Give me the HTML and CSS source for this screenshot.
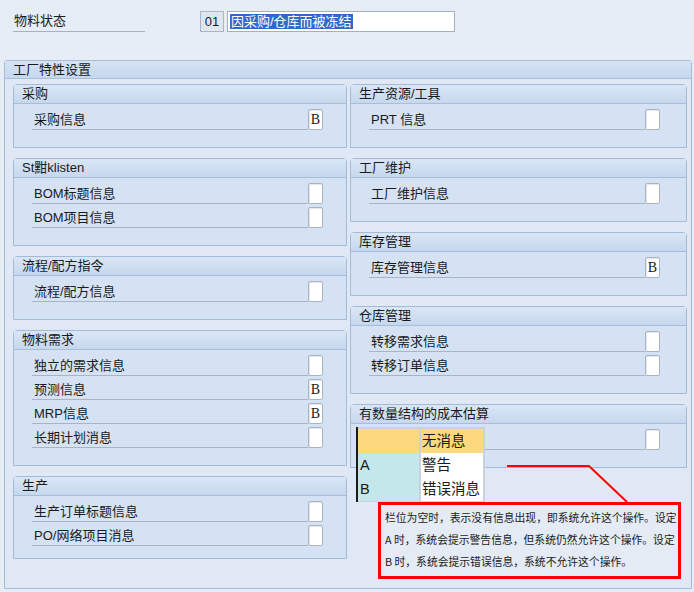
FILE: index.html
```html
<!DOCTYPE html>
<html lang="zh-CN">

<head>
  <meta charset="utf8">
  <title>物料状态 - 工厂特性设置</title>
  <link rel="stylesheet" href="styles.css">
</head>

<body>

  <div class="status-line">
    <span class="status-label">物料状态</span>
    <span class="status-code">01</span>
    <span class="status-input"><span class="selected">因采购/仓库而被冻结</span></span>
  </div>

  <div class="frame">
    <div class="frame-title">工厂特性设置</div>
    <div class="frame-body">

      <div class="column left">
        <div class="group">
          <div class="group-title">采购</div>
          <div class="group-body">
            <div class="row"><span class="lbl">采购信息</span><span class="chk">B</span></div>
          </div>
        </div>

        <div class="group">
          <div class="group-title">St黚klisten</div>
          <div class="group-body">
            <div class="row"><span class="lbl">BOM标题信息</span><span class="chk"></span></div>
            <div class="row"><span class="lbl">BOM项目信息</span><span class="chk"></span></div>
          </div>
        </div>

        <div class="group">
          <div class="group-title">流程/配方指令</div>
          <div class="group-body">
            <div class="row"><span class="lbl">流程/配方信息</span><span class="chk"></span></div>
          </div>
        </div>

        <div class="group">
          <div class="group-title">物料需求</div>
          <div class="group-body">
            <div class="row"><span class="lbl">独立的需求信息</span><span class="chk"></span></div>
            <div class="row"><span class="lbl">预测信息</span><span class="chk">B</span></div>
            <div class="row"><span class="lbl">MRP信息</span><span class="chk">B</span></div>
            <div class="row"><span class="lbl">长期计划消息</span><span class="chk"></span></div>
          </div>
        </div>

        <div class="group last">
          <div class="group-title">生产</div>
          <div class="group-body">
            <div class="row"><span class="lbl">生产订单标题信息</span><span class="chk"></span></div>
            <div class="row"><span class="lbl">PO/网络项目消息</span><span class="chk"></span></div>
          </div>
        </div>
      </div>

      <div class="column right">
        <div class="group">
          <div class="group-title">生产资源/工具</div>
          <div class="group-body">
            <div class="row"><span class="lbl">PRT 信息</span><span class="chk"></span></div>
          </div>
        </div>

        <div class="group">
          <div class="group-title">工厂维护</div>
          <div class="group-body">
            <div class="row"><span class="lbl">工厂维护信息</span><span class="chk"></span></div>
          </div>
        </div>

        <div class="group">
          <div class="group-title">库存管理</div>
          <div class="group-body">
            <div class="row"><span class="lbl">库存管理信息</span><span class="chk">B</span></div>
          </div>
        </div>

        <div class="group">
          <div class="group-title">仓库管理</div>
          <div class="group-body">
            <div class="row"><span class="lbl">转移需求信息</span><span class="chk"></span></div>
            <div class="row"><span class="lbl">转移订单信息</span><span class="chk"></span></div>
          </div>
        </div>

        <div class="group costing">
          <div class="group-title">有数量结构的成本估算</div>
          <div class="group-body">
            <div class="row"><span class="lbl"></span><span class="chk"></span></div>
          </div>

          <!-- value help list, open over the field -->
          <div class="dropdown">
            <div class="opt head"><span class="key"></span><span class="txt">无消息</span></div>
            <div class="opt"><span class="key">A</span><span class="txt">警告</span></div>
            <div class="opt"><span class="key">B</span><span class="txt">错误消息</span></div>
          </div>

          <svg class="connector" width="130" height="40">
            <polyline points="4,2 86,2 124,38" fill="none" stroke="#ff0000" stroke-width="2"></polyline>
          </svg>

          <div class="note">
            栏位为空时，表示没有信息出现，即系统允许这个操作。设定<br>
            A 时，系统会提示警告信息，但系统仍然允许这个操作。设定<br>
            B 时，系统会提示错误信息，系统不允许这个操作。
          </div>
        </div>
      </div>

    </div>
  </div>

</body>

</html>
```

FILE: styles.css
```css
* {
  box-sizing: border-box;
}

body {
  margin: 0;
  width: 694px;
  height: 592px;
  background-color: #e6edf6;
  font-family: "Liberation Sans", "Noto Sans CJK SC", sans-serif;
  font-size: 13px;
  color: #1a1a1a;
  overflow: hidden;
}

/* ---- status line ---- */

div.status-line {
  display: flex;
  align-items: center;
  height: 21px;
  margin: 11px 0 28px 13px;
}

div.status-line span.status-label {
  width: 132px;
  height: 21px;
  line-height: 20px;
  padding-left: 1px;
  border-bottom: 1px solid #a8b2bf;
  margin-right: 55px;
}

div.status-line span.status-code {
  width: 24px;
  height: 21px;
  line-height: 19px;
  text-align: center;
  background-color: #dfe6ee;
  border: 1px solid #a9b5c4;
  margin-right: 3px;
}

div.status-line span.status-input {
  width: 228px;
  height: 21px;
  line-height: 19px;
  padding-left: 2px;
  background-color: #fff;
  border: 1px solid #a3afbe;
}

div.status-line span.selected {
  background-color: #3169c6;
  color: #fff;
  padding: 0 1px;
}

/* ---- frame ---- */

div.frame {
  margin-left: 4px;
  width: 688px;
  height: 529px;
  border: 1px solid #a6bbd6;
  border-radius: 3px 3px 0 0;
  background-color: #dfe8f4;
}

div.frame-title {
  height: 18px;
  line-height: 17px;
  padding-left: 8px;
  background: linear-gradient(#d6e3f3, #c5d7ed);
  border-bottom: 1px solid #a8bed9;
}

div.frame-body {
  display: flex;
  column-gap: 3px;
  padding: 5px 0 0 8px;
}

div.column {
  display: flex;
  flex-direction: column;
  row-gap: 10px;
}

div.column.left {
  width: 334px;
}

div.column.right {
  width: 337px;
}

/* ---- group boxes ---- */

div.group {
  position: relative;
  border: 1px solid #a4bbd8;
  border-radius: 4px 4px 0 0;
  background-color: #d4e2f4;
}

div.group-title {
  height: 19px;
  line-height: 17px;
  padding-left: 8px;
  background: linear-gradient(#d9e6f5, #c6d8ee);
  border-bottom: 1px solid #a7bdd9;
}

div.group-body {
  display: flex;
  flex-direction: column;
  row-gap: 3px;
  padding: 5px 0 17px 18px;
}

div.group.last div.group-body {
  padding-bottom: 12px;
}

div.row {
  display: flex;
  height: 21px;
}

div.row span.lbl {
  width: 276px;
  height: 21px;
  line-height: 21px;
  padding-left: 2px;
  border-bottom: 1px solid #aab3bf;
}

div.row span.chk {
  width: 15px;
  height: 21px;
  line-height: 19px;
  text-align: center;
  font-family: "Liberation Serif", serif;
  font-size: 14px;
  background-color: #fff;
  border: 1px solid #aab3bf;
  border-radius: 2px;
  box-shadow: inset 1px 1px 0 #e4e8ee;
}

/* ---- value help list and note ---- */

div.dropdown {
  position: absolute;
  left: 5px;
  top: 22px;
  width: 129px;
  padding: 2px 2px 1px 0;
  background-color: #c9d2dc;
  border-left: 2px solid #1b1b1b;
  font-family: "Liberation Sans", "Noto Sans CJK SC", sans-serif;
  font-size: 14.5px;
  white-space: nowrap;
}

div.dropdown div.opt {
  display: flex;
  column-gap: 2px;
  height: 24px;
  line-height: 24px;
}

div.dropdown span.key {
  width: 62px;
  padding-left: 2px;
  background-color: #c4e7ec;
}

div.dropdown span.txt {
  width: 63px;
  padding-left: 1px;
  background-color: #fff;
}

div.dropdown div.opt.head span {
  background-color: #fcd97e;
}

svg.connector {
  position: absolute;
  left: 152px;
  top: 59px;
}

div.note {
  position: absolute;
  left: 27px;
  top: 97px;
  width: 303px;
  height: 77px;
  padding: 1px 0 0 4px;
  border: 3px solid #ff0000;
  background-color: #e4ebf5;
  font-family: "Noto Sans CJK SC", sans-serif;
  font-size: 10.8px;
  line-height: 22px;
  white-space: nowrap;
  z-index: 2;
}
```
